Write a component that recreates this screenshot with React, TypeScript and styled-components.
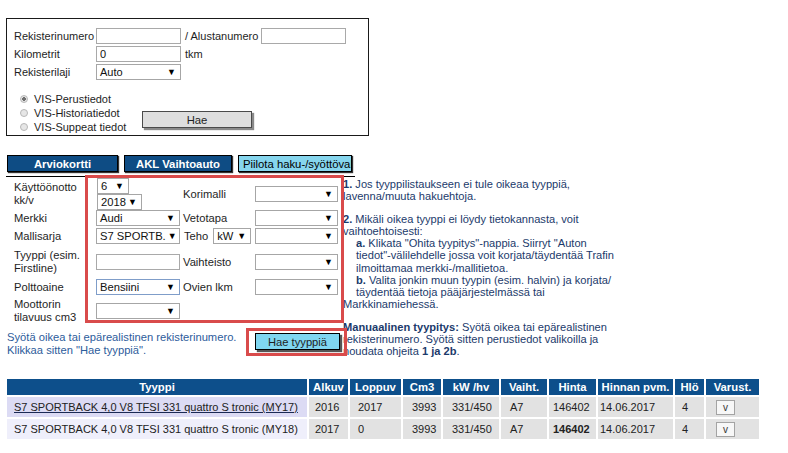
import React from 'react'
import styled, { createGlobalStyle } from 'styled-components'

const GlobalStyle = createGlobalStyle`
  body {
    margin: 0;
    background: #ffffff;
    color: #1e1e1e;
    font-family: "Liberation Sans", Arial, sans-serif;
    font-size: 11px;
  }
`

const Page = styled.div`
  position: relative;
  width: 788px;
  height: 453px;
  padding: 18px 0 0 6px;
  box-sizing: border-box;
  overflow: hidden;
`

/* ---------- top search panel ---------- */

const SearchPanel = styled.div`
  width: 363px;
  border: 1px solid #1a1a1a;
  padding: 8px 0 1px 7px;
  box-sizing: border-box;
  font-size: 11px;
`

const FieldRow = styled.div`
  display: flex;
  align-items: center;
  height: 18px;
`

const FieldLabel = styled.span`
  width: 82px;
  white-space: nowrap;
`

const Suffix = styled.span`
  margin: 0 3px 0 4px;
  white-space: nowrap;
`

const TextInput = styled.input`
  width: ${({ $w = 85 }: { $w?: number }) => $w}px;
  height: 16px;
  box-sizing: border-box;
  border: 1px solid #a9a9a9;
  padding: 0 3px;
  font: inherit;
  color: #111;
  background: #fff;
  outline: none;
`

const SelectBox = styled.div<{ $w: number; $focus?: boolean }>`
  width: ${({ $w }) => $w}px;
  height: 16px;
  box-sizing: border-box;
  display: flex;
  align-items: center;
  justify-content: space-between;
  border: 1px solid ${({ $focus }) => ($focus ? '#7f9dc9' : '#a6a6a6')};
  padding: 0 4px 0 3px;
  background: #fff;
  color: #111;
  white-space: nowrap;
  overflow: hidden;
`

const Arrow = styled.span`
  font-size: 9px;
  color: #000;
  margin-left: 2px;
`

const RadioBlock = styled.div`
  display: flex;
  margin-top: 11px;
`

const RadioList = styled.div`
  width: 128px;
  padding-left: 6px;
  box-sizing: border-box;
`

const RadioRow = styled.label`
  display: flex;
  align-items: center;
  gap: 6px;
  height: 14px;
  white-space: nowrap;
`

const RadioDot = styled.span<{ $checked?: boolean }>`
  width: 8px;
  height: 8px;
  border-radius: 50%;
  box-sizing: border-box;
  border: 1px solid #b8b8b8;
  background: ${({ $checked }) =>
    $checked ? 'radial-gradient(circle, #6f6f6f 0 1.6px, #e4e4e4 2px)' : '#e6e6e6'};
`

const GrayButton = styled.div`
  align-self: flex-end;
  margin-bottom: 6px;
  width: 110px;
  height: 17px;
  box-sizing: border-box;
  border: 1px solid #4a4a4a;
  background: #dedede;
  box-shadow: 2px 2px 1px #8a8a8a;
  display: flex;
  align-items: center;
  justify-content: center;
  font-size: 11.3px;
`

/* ---------- tabs ---------- */

const TabRow = styled.div`
  display: flex;
  gap: 6px;
  width: 349px;
  margin-top: 19px;
  padding: 0 0 4px 1px;
  border-bottom: 1px solid #000;
  box-sizing: border-box;
  font-size: 11.3px;
`

const Tab = styled.div<{ $w: number; $light?: boolean }>`
  width: ${({ $w }) => $w}px;
  height: 17px;
  box-sizing: border-box;
  border: 1px solid #000;
  background: ${({ $light }) => ($light ? '#86d6ee' : '#0e4c84')};
  color: ${({ $light }) => ($light ? '#000' : '#fff')};
  font-weight: ${({ $light }) => ($light ? 400 : 700)};
  box-shadow: 1px 1px 1px #333;
  display: flex;
  align-items: center;
  justify-content: ${({ $light }) => ($light ? 'flex-start' : 'center')};
  padding-left: ${({ $light }) => ($light ? 4 : 0)}px;
  white-space: nowrap;
  overflow: hidden;
`

/* ---------- form + info ---------- */

const Main = styled.div`
  display: flex;
  font-size: 11.2px;
`

const FormColumn = styled.div`
  width: 337px;
  flex: none;
`

const FormGrid = styled.div`
  display: grid;
  grid-template-columns: 82px 87px 72px 83px;
  grid-template-rows: 31px 18px 18px 33px 17px 31px;
  align-items: center;
  margin: 1px 0 0 8px;
`

const TwoLine = styled.span`
  line-height: 13px;
`

const DateStack = styled.div`
  display: flex;
  flex-direction: column;
  align-items: flex-start;
  padding-left: 1px;
`

const TehoCell = styled.div`
  display: flex;
  align-items: center;
  gap: 5px;
  padding-left: 1px;
`

const HintRow = styled.div`
  display: flex;
  margin-top: 5px;
  padding-left: 1px;
`

const HintText = styled.div`
  width: 248px;
  color: #2d5c9b;
  line-height: 13px;
`

const CyanButton = styled.div`
  margin-top: 2px;
  width: 85px;
  height: 17px;
  box-sizing: border-box;
  border: 1px solid #000;
  background: #7fd6f0;
  box-shadow: 2px 2px 1px #555;
  display: flex;
  align-items: center;
  justify-content: center;
`

const Info = styled.div`
  padding-top: 1px;
  color: #1b3a6b;
  font-size: 11.1px;
  line-height: 12.1px;
  white-space: nowrap;
`

const Para = styled.p`
  margin: 0 0 11px;

  &:last-child {
    margin-bottom: 0;
  }
`

const Indent = styled.span`
  display: block;
  padding-left: 13px;
`

/* ---------- result table ---------- */

const ResultTable = styled.table`
  margin: 20px 0 0 -1px;
  border-collapse: separate;
  border-spacing: 2px;
  table-layout: fixed;
  font-size: 11px;
`

const HeadCell = styled.th<{ $w: number }>`
  width: ${({ $w }) => $w}px;
  height: 16px;
  box-sizing: border-box;
  padding: 0;
  background: #0d4f8b;
  color: #fff;
  font-weight: 700;
  font-size: 11.3px;
  text-align: center;
  white-space: nowrap;
`

const Cell = styled.td<{ $pad: number; $first?: boolean; $alt?: boolean }>`
  height: 20px;
  box-sizing: border-box;
  padding: 0 0 0 ${({ $pad }) => $pad}px;
  background: ${({ $first, $alt }) =>
    $first ? ($alt ? '#efeffb' : '#dcdbf4') : '#e2e2e2'};
  color: #222;
  white-space: nowrap;
`

const TypeLink = styled.span<{ $active?: boolean }>`
  text-decoration: ${({ $active }) => ($active ? 'underline' : 'none')};
  text-decoration-color: #1b2a55;
`

const SmallButton = styled.span`
  display: inline-flex;
  align-items: center;
  justify-content: center;
  width: 17px;
  height: 13px;
  border: 1px solid #a3a3a3;
  background: #f7f7f7;
  font-size: 10px;
  color: #333;
`

const Annotation = styled.div<{ $x: number; $y: number; $w: number; $h: number }>`
  position: absolute;
  left: ${({ $x }) => $x}px;
  top: ${({ $y }) => $y}px;
  width: ${({ $w }) => $w}px;
  height: ${({ $h }) => $h}px;
  box-sizing: border-box;
  border: 3px solid #d94b4b;
  pointer-events: none;
`

const Select = ({ w, value = '', focus }: { w: number; value?: string; focus?: boolean }) => (
  <SelectBox $w={w} $focus={focus}>
    <span>{value}</span>
    <Arrow>▼</Arrow>
  </SelectBox>
)

const columns = [
  { label: 'Tyyppi', w: 300, pad: 7 },
  { label: 'Alkuv', w: 39, pad: 6 },
  { label: 'Loppuv', w: 51, pad: 8 },
  { label: 'Cm3', w: 38, pad: 9 },
  { label: 'kW /hv', w: 56, pad: 9 },
  { label: 'Vaiht.', w: 46, pad: 9 },
  { label: 'Hinta', w: 47, pad: 4 },
  { label: 'Hinnan pvm.', w: 75, pad: 2 },
  { label: 'Hlö', w: 29, pad: 7 },
  { label: 'Varust.', w: 53, pad: 10 },
]

const rows = [
  { type: 'S7 SPORTBACK 4,0 V8 TFSI 331 quattro S tronic (MY17)', from: '2016', to: '2017', bold: false },
  { type: 'S7 SPORTBACK 4,0 V8 TFSI 331 quattro S tronic (MY18)', from: '2017', to: '0', bold: true },
]

const App: React.FC = () => {
  return (
    <Page>
      <GlobalStyle />

      <SearchPanel>
        <FieldRow>
          <FieldLabel>Rekisterinumero</FieldLabel>
          <TextInput readOnly defaultValue="" />
          <Suffix>/ Alustanumero</Suffix>
          <TextInput readOnly defaultValue="" />
        </FieldRow>
        <FieldRow>
          <FieldLabel>Kilometrit</FieldLabel>
          <TextInput readOnly defaultValue="0" />
          <Suffix>tkm</Suffix>
        </FieldRow>
        <FieldRow>
          <FieldLabel>Rekisterilaji</FieldLabel>
          <Select w={85} value="Auto" />
        </FieldRow>
        <RadioBlock>
          <RadioList>
            <RadioRow>
              <RadioDot $checked />
              VIS-Perustiedot
            </RadioRow>
            <RadioRow>
              <RadioDot />
              VIS-Historiatiedot
            </RadioRow>
            <RadioRow>
              <RadioDot />
              VIS-Suppeat tiedot
            </RadioRow>
          </RadioList>
          <GrayButton>Hae</GrayButton>
        </RadioBlock>
      </SearchPanel>

      <TabRow>
        <Tab $w={111}>Arviokortti</Tab>
        <Tab $w={108}>AKL Vaihtoauto</Tab>
        <Tab $w={114} $light>
          Piilota haku-/syöttöval
        </Tab>
      </TabRow>

      <Main>
        <FormColumn>
          <FormGrid>
            <TwoLine>
              Käyttöönotto
              <br />
              kk/v
            </TwoLine>
            <DateStack>
              <Select w={32} value="6" />
              <Select w={45} value="2018" />
            </DateStack>
            <span>Korimalli</span>
            <Select w={83} />

            <span>Merkki</span>
            <Select w={84} value="Audi" />
            <span>Vetotapa</span>
            <Select w={83} />

            <span>Mallisarja</span>
            <Select w={84} value="S7 SPORTB." />
            <TehoCell>
              Teho <Select w={38} value="kW" />
            </TehoCell>
            <Select w={83} />

            <TwoLine>
              Tyyppi (esim.
              <br />
              Firstline)
            </TwoLine>
            <TextInput readOnly defaultValue="" $w={84} />
            <span>Vaihteisto</span>
            <Select w={83} />

            <span>Polttoaine</span>
            <Select w={84} value="Bensiini" focus />
            <span>Ovien lkm</span>
            <Select w={83} />

            <TwoLine>
              Moottorin
              <br />
              tilavuus cm3
            </TwoLine>
            <Select w={84} />
          </FormGrid>

          <HintRow>
            <HintText>
              Syötä oikea tai epärealistinen rekisterinumero.
              <br />
              Klikkaa sitten "Hae tyyppiä".
            </HintText>
            <CyanButton>Hae tyyppiä</CyanButton>
          </HintRow>
        </FormColumn>

        <Info>
          <Para>
            <b>1.</b> Jos tyyppilistaukseen ei tule oikeaa tyyppiä,
            <br />
            lavenna/muuta hakuehtoja.
          </Para>
          <Para>
            <b>2.</b> Mikäli oikea tyyppi ei löydy tietokannasta, voit
            <br />
            vaihtoehtoisesti:
            <Indent>
              <b>a.</b> Klikata "Ohita tyypitys"-nappia. Siirryt "Auton
              <br />
              tiedot"-välilehdelle jossa voit korjata/täydentää Trafin
              <br />
              ilmoittamaa merkki-/mallitietoa.
              <br />
              <b>b.</b> Valita jonkin muun tyypin (esim. halvin) ja korjata/
              <br />
              täydentää tietoja pääjärjestelmässä tai
            </Indent>
            Markkinamiehessä.
          </Para>
          <Para>
            <b>Manuaalinen tyypitys:</b> Syötä oikea tai epärealistinen
            <br />
            rekisterinumero. Syötä sitten perustiedot valikoilla ja
            <br />
            noudata ohjeita <b>1 ja 2b</b>.
          </Para>
        </Info>
      </Main>

      <ResultTable>
        <thead>
          <tr>
            {columns.map((c) => (
              <HeadCell key={c.label} $w={c.w}>
                {c.label}
              </HeadCell>
            ))}
          </tr>
        </thead>
        <tbody>
          {rows.map((r, i) => (
            <tr key={r.type}>
              <Cell $pad={columns[0].pad} $first $alt={i === 1}>
                <TypeLink $active={i === 0}>{r.type}</TypeLink>
              </Cell>
              <Cell $pad={columns[1].pad}>{r.from}</Cell>
              <Cell $pad={columns[2].pad}>{r.to}</Cell>
              <Cell $pad={columns[3].pad}>3993</Cell>
              <Cell $pad={columns[4].pad}>331/450</Cell>
              <Cell $pad={columns[5].pad}>A7</Cell>
              <Cell $pad={columns[6].pad}>{r.bold ? <b>146402</b> : '146402'}</Cell>
              <Cell $pad={columns[7].pad}>14.06.2017</Cell>
              <Cell $pad={columns[8].pad}>4</Cell>
              <Cell $pad={columns[9].pad}>
                <SmallButton>v</SmallButton>
              </Cell>
            </tr>
          ))}
        </tbody>
      </ResultTable>

      <Annotation $x={85} $y={175} $w={259} $h={148} />
      <Annotation $x={246} $y={328} $w={101} $h={28} />
    </Page>
  )
}

export default App
